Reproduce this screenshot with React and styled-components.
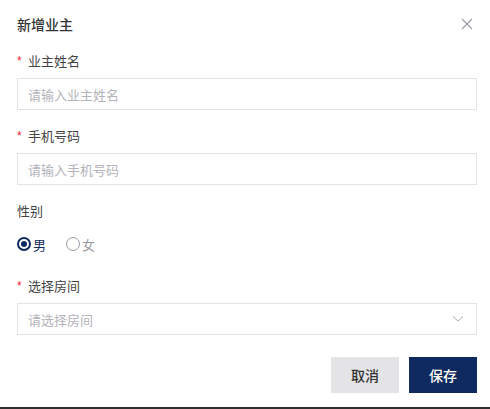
import React, { useState } from "react";
import styled, { createGlobalStyle } from "styled-components";

const Global = createGlobalStyle`
  html, body { margin: 0; padding: 0; background: #2e2e2e; }
  body { font-family: "Noto Sans CJK SC", "Noto Sans", sans-serif; }
  * { box-sizing: border-box; }
`;

const Modal = styled.div`
  width: 490px;
  height: 407px;
  background: #fff;
  padding: 14px 13px 0 17px;
  display: flex;
  flex-direction: column;
`;

const Header = styled.div`
  display: flex;
  align-items: center;
  justify-content: space-between;
  height: 20px;
  margin-bottom: 17px;
`;

const Title = styled.div`
  font-size: 14px;
  color: #333;
  line-height: 20px;
  font-weight: 500;
`;

const Close = styled.button`
  border: none;
  background: none;
  padding: 0;
  width: 12px;
  height: 12px;
  margin-right: 4px;
  display: flex;
  cursor: pointer;
`;

const Form = styled.div`
  display: flex;
  flex-direction: column;
  width: 460px;
`;

const Item = styled.div`
  display: flex;
  flex-direction: column;
  margin-bottom: ${(p) => p.$mb ?? 16}px;
`;

const Label = styled.div`
  font-size: 13px;
  line-height: 20px;
  color: #444;
  margin-bottom: 7px;
  display: flex;
  align-items: center;
`;

const Star = styled.span`
  color: #f5222d;
  font-size: 12px;
  margin-right: 4px;
  width: 7px;
  font-family: "Liberation Sans", sans-serif;
`;

const Input = styled.input`
  width: 100%;
  height: 32px;
  border: 1px solid #e2e2e2;
  padding: 0 10px;
  font-size: 13px;
  font-family: inherit;
  color: #333;
  outline: none;
  &::placeholder { color: #b3b3ba; }
`;

const Select = styled.div`
  width: 100%;
  height: 32px;
  border: 1px solid #e2e2e2;
  padding: 0 12px 0 10px;
  display: flex;
  align-items: center;
  justify-content: space-between;
  font-size: 13px;
  color: #b3b3ba;
`;

const RadioRow = styled.div`
  display: flex;
  align-items: center;
  height: 32px;
  gap: 20px;
`;

const RadioLabel = styled.label`
  display: flex;
  align-items: center;
  gap: 2px;
  font-size: 13px;
  color: ${(p) => (p.$on ? "#0f2a5e" : "#999")};
  cursor: pointer;
`;

const Circle = styled.span`
  width: 14px;
  height: 14px;
  border-radius: 50%;
  border: ${(p) => (p.$on ? "2px solid #0f2a5e" : "1px solid #9a9aa6")};
  display: flex;
  align-items: center;
  justify-content: center;
  &::after {
    content: "";
    width: 6px;
    height: 6px;
    border-radius: 50%;
    background: ${(p) => (p.$on ? "#0f2a5e" : "transparent")};
  }
`;

const Footer = styled.div`
  display: flex;
  justify-content: flex-end;
  gap: 10px;
  width: 460px;
  margin-top: 6px;
`;

const Button = styled.button`
  width: 68px;
  height: 36px;
  border: none;
  font-family: inherit;
  font-size: 14px;
  font-weight: 500;
  cursor: pointer;
  background: ${(p) => (p.$primary ? "#0f2a5e" : "#e4e4e6")};
  color: ${(p) => (p.$primary ? "#fff" : "#333")};
`;

export default function App() {
  const [gender, setGender] = useState("m");
  return (
    <>
      <Global />
      <Modal>
        <Header>
          <Title>新增业主</Title>
          <Close aria-label="close">
            <svg width="12" height="12" viewBox="0 0 12 12">
              <path d="M1 1L11 11M11 1L1 11" stroke="#9a9aa6" strokeWidth="1.1" />
            </svg>
          </Close>
        </Header>
        <Form>
          <Item>
            <Label><Star>*</Star>业主姓名</Label>
            <Input placeholder="请输入业主姓名" />
          </Item>
          <Item>
            <Label><Star>*</Star>手机号码</Label>
            <Input placeholder="请输入手机号码" />
          </Item>
          <Item>
            <Label>性别</Label>
            <RadioRow>
              <RadioLabel $on={gender === "m"} onClick={() => setGender("m")}>
                <Circle $on={gender === "m"} />男
              </RadioLabel>
              <RadioLabel $on={gender === "f"} onClick={() => setGender("f")}>
                <Circle $on={gender === "f"} />女
              </RadioLabel>
            </RadioRow>
          </Item>
          <Item>
            <Label><Star>*</Star>选择房间</Label>
            <Select>
              请选择房间
              <svg width="12" height="8" viewBox="0 0 12 8">
                <path d="M1 1.5L6 6L11 1.5" stroke="#a8a8b2" strokeWidth="1" fill="none" />
              </svg>
            </Select>
          </Item>
        </Form>
        <Footer>
          <Button>取消</Button>
          <Button $primary>保存</Button>
        </Footer>
      </Modal>
    </>
  );
}
